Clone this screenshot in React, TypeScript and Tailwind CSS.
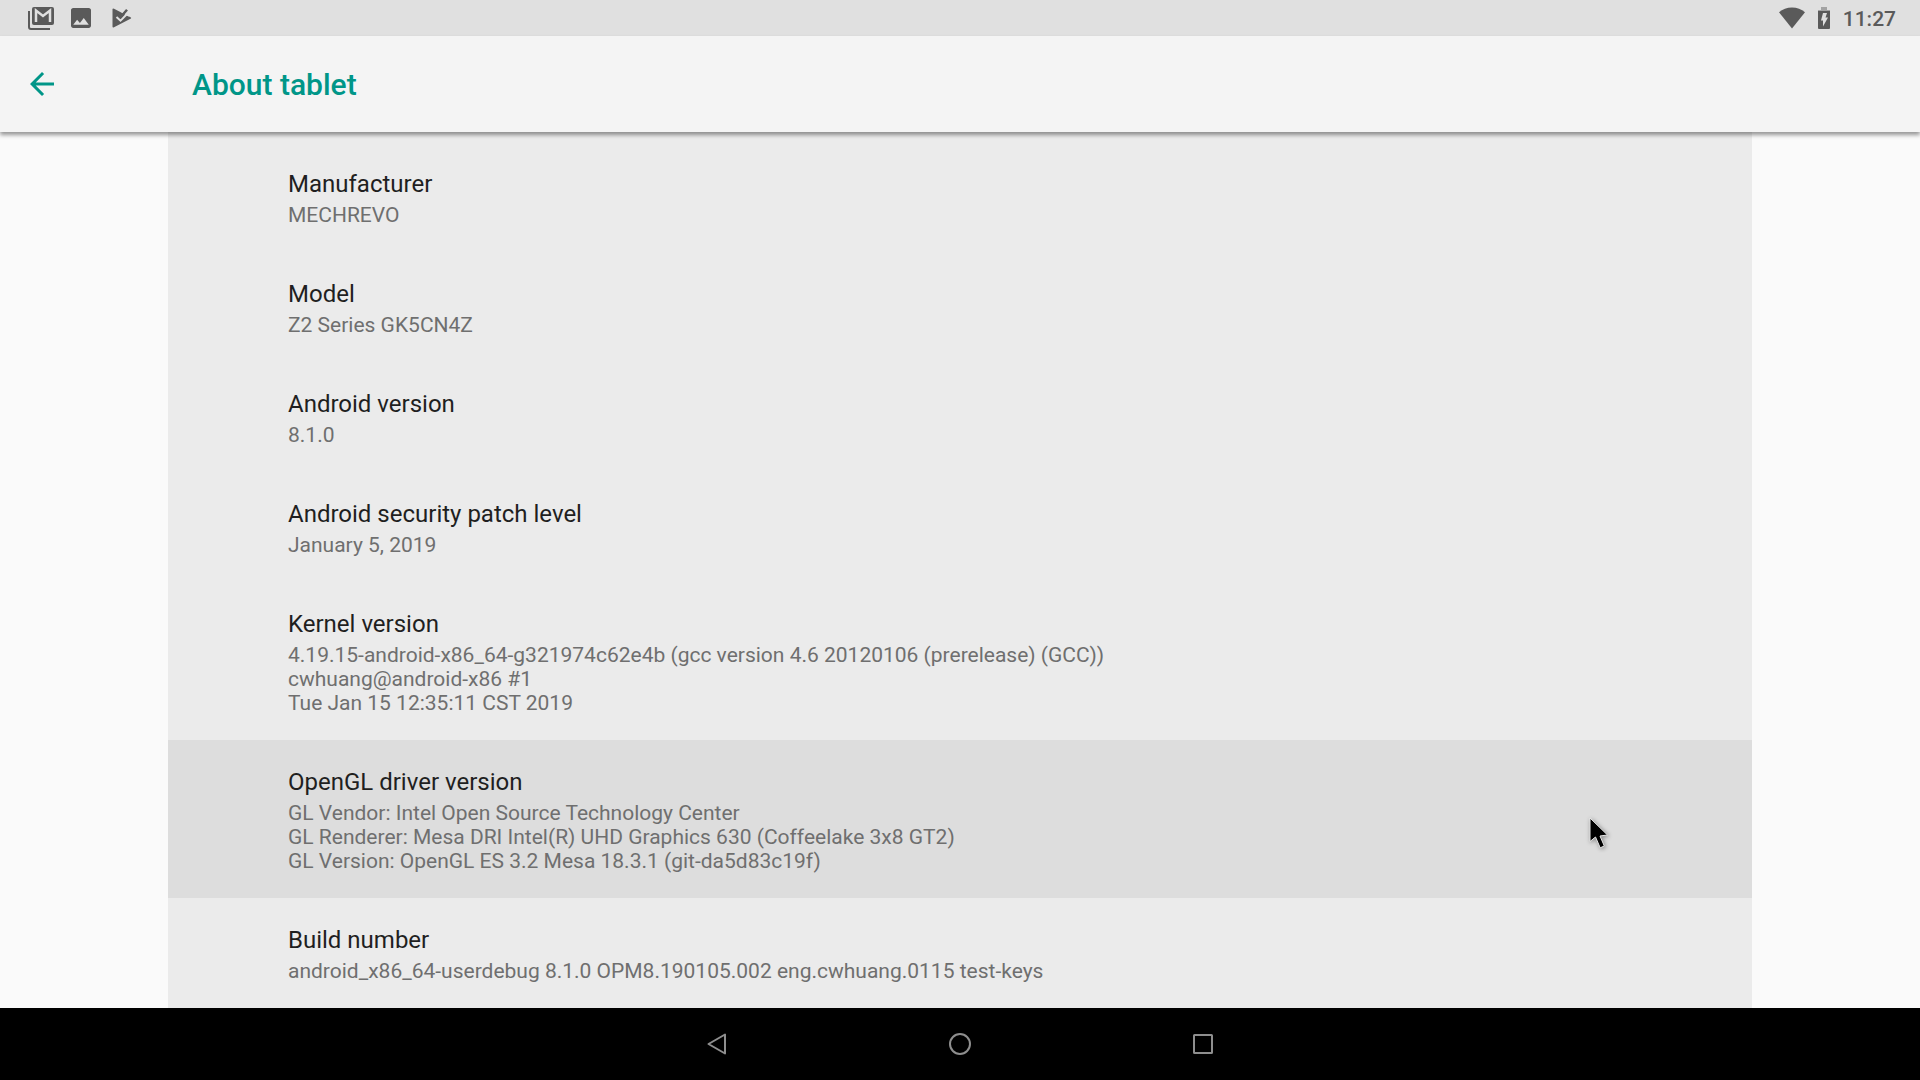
import type { ReactNode } from 'react';

type Preference = {
  title: string;
  summary: string[];
  hovered?: boolean;
};

const PREFERENCES: Preference[] = [
  { title: 'Manufacturer', summary: ['MECHREVO'] },
  { title: 'Model', summary: ['Z2 Series GK5CN4Z'] },
  { title: 'Android version', summary: ['8.1.0'] },
  { title: 'Android security patch level', summary: ['January 5, 2019'] },
  {
    title: 'Kernel version',
    summary: [
      '4.19.15-android-x86_64-g321974c62e4b (gcc version 4.6 20120106 (prerelease) (GCC))',
      'cwhuang@android-x86 #1',
      'Tue Jan 15 12:35:11 CST 2019',
    ],
  },
  {
    title: 'OpenGL driver version',
    summary: [
      'GL Vendor: Intel Open Source Technology Center',
      'GL Renderer: Mesa DRI Intel(R) UHD Graphics 630 (Coffeelake 3x8 GT2)',
      'GL Version: OpenGL ES 3.2 Mesa 18.3.1 (git-da5d83c19f)',
    ],
    hovered: true,
  },
  {
    title: 'Build number',
    summary: ['android_x86_64-userdebug 8.1.0 OPM8.190105.002 eng.cwhuang.0115 test-keys'],
  },
];

export default function App() {
  return (
    <div className="flex h-screen flex-col bg-[#fafafa] font-['Roboto',sans-serif]">
      <StatusBar />
      <AppBar title="About tablet" />
      <main className="min-h-0 flex-1 overflow-y-auto px-42">
        <ul className="min-h-full bg-[#ebebeb] pt-[10px]">
          {PREFERENCES.map((pref) => (
            <PreferenceRow key={pref.title} pref={pref} />
          ))}
        </ul>
      </main>
      <NavigationBar />
    </div>
  );
}

function StatusBar() {
  return (
    <div className="flex h-9 shrink-0 items-center justify-between bg-[#e0e0e0] pr-6 pl-7 text-[#5a5a5a]">
      <div className="flex items-center gap-4">
        <GmailIcon />
        <ImageIcon />
        <PlayCheckIcon />
      </div>
      <div className="flex items-center gap-[13px]">
        <WifiIcon />
        <BatteryIcon />
        <time className="pt-0.5 text-[21px] leading-6 font-medium">11:27</time>
      </div>
    </div>
  );
}

function AppBar({ title }: { title: string }) {
  return (
    <header className="z-10 flex h-24 shrink-0 items-center bg-[#f4f4f4] pl-6 text-[#009688] shadow-[0_3px_4px_rgba(0,0,0,0.4)]">
      <button type="button" aria-label="Navigate up" className="mr-33">
        <svg viewBox="0 0 24 24" className="size-9" fill="currentColor">
          <path d="M20 11H7.83l5.59-5.59L12 4l-8 8 8 8 1.41-1.41L7.83 13H20z" />
        </svg>
      </button>
      <h1 className="pt-0.5 text-[30px] leading-9 font-medium">{title}</h1>
    </header>
  );
}

function PreferenceRow({ pref }: { pref: Preference }) {
  return (
    <li className={pref.hovered ? 'relative bg-[#dddddd]' : ''}>
      <button type="button" className="block w-full pt-7 pr-6 pb-[25px] pl-30 text-left">
        <span className="block text-2xl leading-7 text-[#1f1f1f]">{pref.title}</span>
        <span className="mt-[5px] block text-[21px] leading-6 text-[#6f6f6f]">
          {pref.summary.map((line) => (
            <span key={line} className="block">
              {line}
            </span>
          ))}
        </span>
      </button>
      {pref.hovered && <Pointer />}
    </li>
  );
}

function Pointer() {
  return (
    <svg
      viewBox="0 0 32 40"
      className="pointer-events-none absolute top-18 right-[143px] h-10 w-8 drop-shadow-[1px_1px_2px_rgba(0,0,0,0.4)]"
    >
      <path
        d="M13 6V29.500L18.500 25 23.200 35.800 27.300 34 23 24 30.500 23Z"
        fill="#000"
        stroke="#e6e6e6"
        strokeWidth="1"
        strokeLinejoin="round"
      />
    </svg>
  );
}

function NavigationBar() {
  return (
    <nav className="flex h-18 shrink-0 justify-center bg-black pr-px text-[#8e8e8e]">
      <NavButton label="Back">
        <path d="M25 7.500V26.500L8.500 17Z" strokeLinejoin="round" />
      </NavButton>
      <NavButton label="Home">
        <circle cx="17" cy="17" r="10" />
      </NavButton>
      <NavButton label="Overview">
        <rect x="8" y="8" width="18" height="18" rx="0.500" />
      </NavButton>
    </nav>
  );
}

function NavButton({ label, children }: { label: string; children: ReactNode }) {
  return (
    <button type="button" aria-label={label} className="flex w-[243px] items-center justify-center">
      <svg
        viewBox="0 0 34 34"
        className="size-[34px]"
        fill="none"
        stroke="currentColor"
        strokeWidth="2"
      >
        {children}
      </svg>
    </button>
  );
}

function GmailIcon() {
  return (
    <svg viewBox="0 0 27 24" className="h-6 w-[27px]" fill="none">
      <path d="M1 5V21a2 2 0 0 0 2 2H22" stroke="currentColor" strokeWidth="2" />
      <rect x="4" y="1" width="22" height="18" rx="2" fill="currentColor" />
      <path d="M8 16V4.500L15 10 22 4.500V16" stroke="#e0e0e0" strokeWidth="2.500" />
    </svg>
  );
}

function ImageIcon() {
  return (
    <svg viewBox="3 3 18 18" className="size-5" fill="currentColor">
      <path d="M21 19V5c0-1.100-.9-2-2-2H5c-1.100 0-2 .9-2 2v14c0 1.100.9 2 2 2h14c1.100 0 2-.9 2-2zM8.500 13.500l2.500 3.010L14.500 12l4.500 6H5l3.500-4.500z" />
    </svg>
  );
}

function PlayCheckIcon() {
  return (
    <svg viewBox="0 0 20 20" className="ml-[5px] size-5" fill="none">
      <path d="M0.500 1.500Q0.500 0 2 0.700L18.500 9.200Q20 10 18.500 10.800L2 19.300Q0.500 20 0.500 18.500Z" fill="currentColor" />
      <path d="M9.500 4.500 13.500 0 19 3.500V7L16.500 8.500Z" fill="#e0e0e0" />
      <path d="M4.500 9 8.500 12.700 16.500 4.500" stroke="#e0e0e0" strokeWidth="2" />
      <path d="M5.500 6 8.700 9 15 1.800" stroke="currentColor" strokeWidth="2.500" />
    </svg>
  );
}

function WifiIcon() {
  return (
    <svg viewBox="0 0 26 22" className="h-[22px] w-[26px]" fill="currentColor">
      <path d="M13 21.500 0 5.200C3.500 2.200 8 .5 13 .5s9.500 1.700 13 4.700Z" />
    </svg>
  );
}

function BatteryIcon() {
  return (
    <svg viewBox="0 0 12 22" className="h-[22px] w-3">
      <path d="M3 0H9V3H12V5H0V3H3Z" fill="#a3a3a3" />
      <path d="M0 4H12V21a1 1 0 0 1-1 1H1a1 1 0 0 1-1-1Z" fill="currentColor" />
      <path d="M5 6H9L7.500 10.500H10L5 19.500V13.500H3Z" fill="#e0e0e0" />
    </svg>
  );
}
